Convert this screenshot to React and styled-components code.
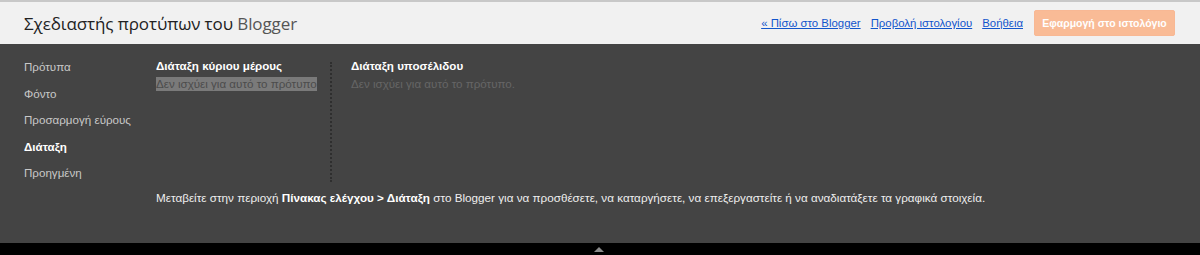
import React from "react";
import styled, { createGlobalStyle } from "styled-components";

const GlobalStyle = createGlobalStyle`
    body {
        margin: 0;
        background: #000;
        font-family: "Liberation Sans", Arial, sans-serif;
    }
`;

const navItems = [
    { label: "Πρότυπα" },
    { label: "Φόντο" },
    { label: "Προσαρμογή εύρους" },
    { label: "Διάταξη", active: true },
    { label: "Προηγμένη" },
];

const App = () => {
    return (
        <Page>
            <GlobalStyle />
            <Header>
                <Title>
                    Σχεδιαστής προτύπων του <Brand>Blogger</Brand>
                </Title>
                <HeaderLinks>
                    <HeaderLink href="#">« Πίσω στο Blogger</HeaderLink>
                    <HeaderLink href="#">Προβολή ιστολογίου</HeaderLink>
                    <HeaderLink href="#">Βοήθεια</HeaderLink>
                    <ApplyButton disabled>Εφαρμογή στο ιστολόγιο</ApplyButton>
                </HeaderLinks>
            </Header>
            <Panel>
                <Nav>
                    {navItems.map((item) => (
                        <NavItem key={item.label} active={item.active}>
                            {item.label}
                        </NavItem>
                    ))}
                </Nav>
                <Content>
                    <Columns>
                        <Column divider>
                            <ColumnTitle>Διάταξη κύριου μέρους</ColumnTitle>
                            <Note selected>Δεν ισχύει για αυτό το πρότυπο</Note>
                        </Column>
                        <Column>
                            <ColumnTitle>Διάταξη υποσέλιδου</ColumnTitle>
                            <Note>Δεν ισχύει για αυτό το πρότυπο.</Note>
                        </Column>
                    </Columns>
                    <Hint>
                        Μεταβείτε στην περιοχή <b>Πίνακας ελέγχου &gt; Διάταξη</b> στο
                        Blogger για να προσθέσετε, να καταργήσετε, να επεξεργαστείτε ή να
                        αναδιατάξετε τα γραφικά στοιχεία.
                    </Hint>
                </Content>
            </Panel>
            <Strip>
                <Arrow />
            </Strip>
        </Page>
    );
};

export default App;

const Page = styled.div`
    width: 1200px;
    height: 255px;
    display: flex;
    flex-direction: column;
    overflow: hidden;
`;

const Header = styled.div`
    height: 42px;
    flex-shrink: 0;
    background: #f1f1f1;
    border-top: 2px solid #c8c8c8;
    display: flex;
    align-items: center;
    justify-content: space-between;
    padding: 0 25px 0 24px;
`;

const Title = styled.h1`
    margin: 0;
    font-family: "Open Sans", "Noto Sans", sans-serif;
    font-weight: 400;
    font-size: 17px;
    color: #222;
    letter-spacing: -0.1px;
`;

const Brand = styled.span`
    color: #555;
`;

const HeaderLinks = styled.div`
    display: flex;
    align-items: center;
    gap: 10px;
`;

const HeaderLink = styled.a`
    font-size: 11.4px;
    color: #15c;
    text-decoration: underline;
`;

const ApplyButton = styled.button`
    margin-left: 1px;
    height: 26px;
    width: 141px;
    border: 1px solid #f8b894;
    border-radius: 2px;
    background: #f9bb96;
    color: #fff;
    font-family: "Liberation Sans", Arial, sans-serif;
    font-weight: bold;
    font-size: 10.5px;
    padding: 0;
`;

const Panel = styled.div`
    height: 199px;
    flex-shrink: 0;
    background: #444;
    display: flex;
`;

const Nav = styled.div`
    width: 156px;
    flex-shrink: 0;
    padding: 10px 0 0 24px;
    box-sizing: border-box;
    display: flex;
    flex-direction: column;
`;

const NavItem = styled.div`
    line-height: 26.5px;
    font-size: 11.6px;
    white-space: nowrap;
    color: ${({ active }) => (active ? "#fff" : "#c8c8c8")};
    font-weight: ${({ active }) => (active ? "bold" : "normal")};
`;

const Content = styled.div`
    flex: 1;
    display: flex;
    flex-direction: column;
`;

const Columns = styled.div`
    display: flex;
    height: 138px;
    box-sizing: border-box;
    padding-top: 15px;
`;

const Column = styled.div`
    position: relative;
    width: ${({ divider }) => (divider ? "176px" : "auto")};
    padding-left: ${({ divider }) => (divider ? "0" : "19px")};
    box-sizing: border-box;

    &::after {
        content: "";
        display: ${({ divider }) => (divider ? "block" : "none")};
        position: absolute;
        right: 0;
        top: 3px;
        bottom: 0;
        border-right: 2px dotted #2e2e2e;
    }
`;

const ColumnTitle = styled.div`
    font-size: 11.6px;
    font-weight: bold;
    color: #fff;
    line-height: 14px;
`;

const Note = styled.div`
    display: inline-block;
    margin-top: 4px;
    font-size: 11.6px;
    line-height: 14px;
    color: ${({ selected }) => (selected ? "#4c4c4c" : "#666")};
    background: ${({ selected }) => (selected ? "#7a7a7a" : "transparent")};
`;

const Hint = styled.div`
    margin-top: 9px;
    font-size: 11.7px;
    color: #eee;
    line-height: 14px;

    b {
        color: #fff;
    }
`;

const Strip = styled.div`
    flex: 1;
    background: #000;
    display: flex;
    justify-content: center;
    align-items: flex-end;
    padding-bottom: 3px;
`;

const Arrow = styled.div`
    width: 0;
    height: 0;
    margin-left: -2px;
    border-left: 5px solid transparent;
    border-right: 5px solid transparent;
    border-bottom: 5px solid #8a8a8a;
`;
